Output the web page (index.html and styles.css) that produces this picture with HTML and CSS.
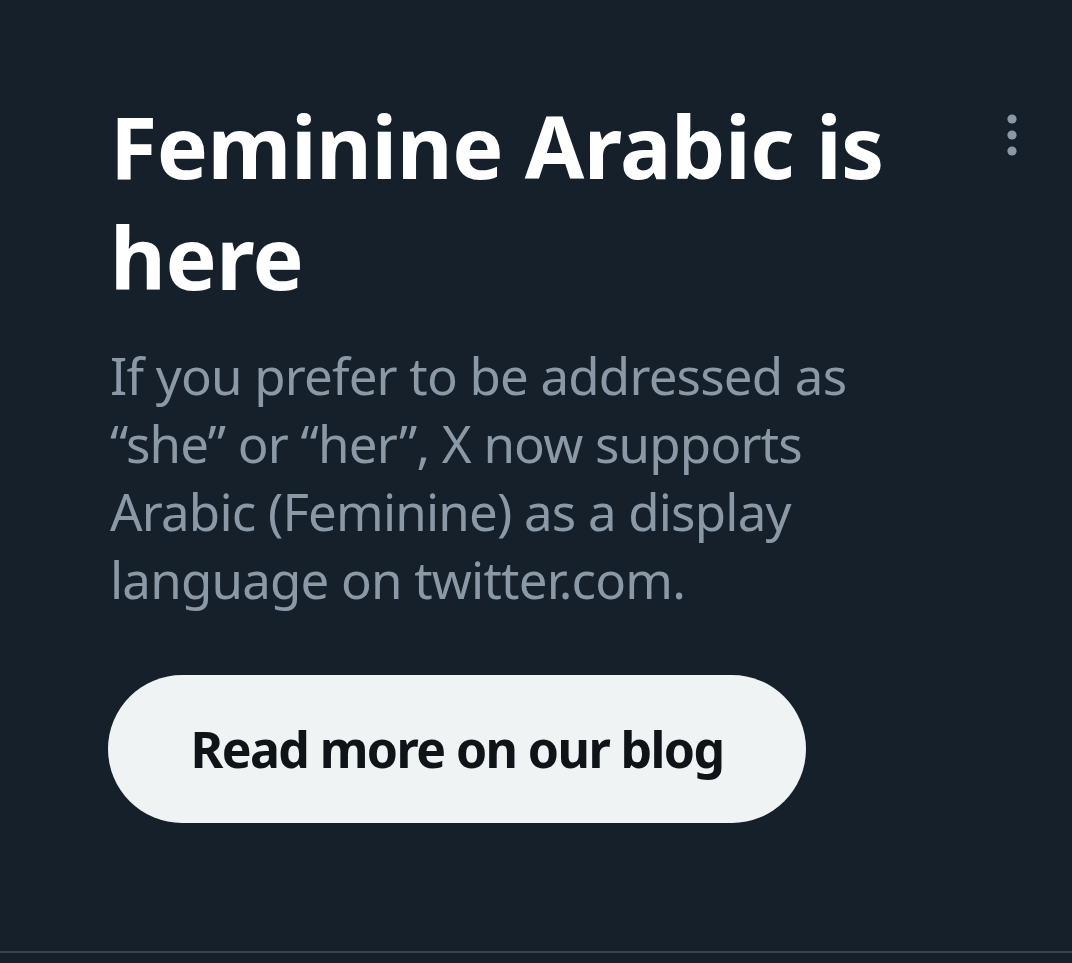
FILE: index.html
```html
<!DOCTYPE html>
<html>
<head>
<meta charset="utf-8">
<link rel="stylesheet" href="styles.css">
</head>
<body>
<div class="card">
  <div class="content">
    <h1 class="title">Feminine Arabic is here</h1>
    <p class="desc">If you prefer to be addressed as “she” or “her”, X now supports Arabic (Feminine) as a display language on twitter.com.</p>
    <button class="cta">Read more on our blog</button>
  </div>
  <div class="more">
    <svg width="20" height="48" viewBox="0 0 20 48"><circle cx="10" cy="8" r="4.6" fill="#8b98a5"/><circle cx="10" cy="24" r="4.6" fill="#8b98a5"/><circle cx="10" cy="40" r="4.6" fill="#8b98a5"/></svg>
  </div>
</div>
</body>
</html>
```
FILE: styles.css
```css
html, body {
  margin: 0;
  padding: 0;
  background: #15202b;
}
body {
  width: 1072px;
  height: 963px;
  overflow: hidden;
  font-family: "Noto Sans", "Open Sans", sans-serif;
}
.card {
  display: flex;
  justify-content: space-between;
  height: 953px;
  border-bottom: 2px solid #38444d;
  box-sizing: border-box;
  padding: 90px 50px 0 110px;
}
.content {
  width: 820px;
}
.title {
  margin: 0;
  color: #ffffff;
  font-size: 86px;
  line-height: 111px;
  font-weight: 700;
  letter-spacing: -0.5px;
}
.desc {
  margin: 29px 0 0;
  color: #8b98a5;
  font-size: 51px;
  line-height: 68px;
  letter-spacing: -0.8px;
  width: 780px;
}
.cta {
  margin-top: 62px;
  margin-left: -2px;
  width: 698px;
  height: 148px;
  border: none;
  border-radius: 74px;
  background: #eff3f4;
  color: #0f1419;
  font-family: "Noto Sans", sans-serif;
  font-weight: 700;
  font-size: 50px;
  letter-spacing: -1.6px;
  padding: 0;
}
.more {
  padding-top: 21px;
}
```
